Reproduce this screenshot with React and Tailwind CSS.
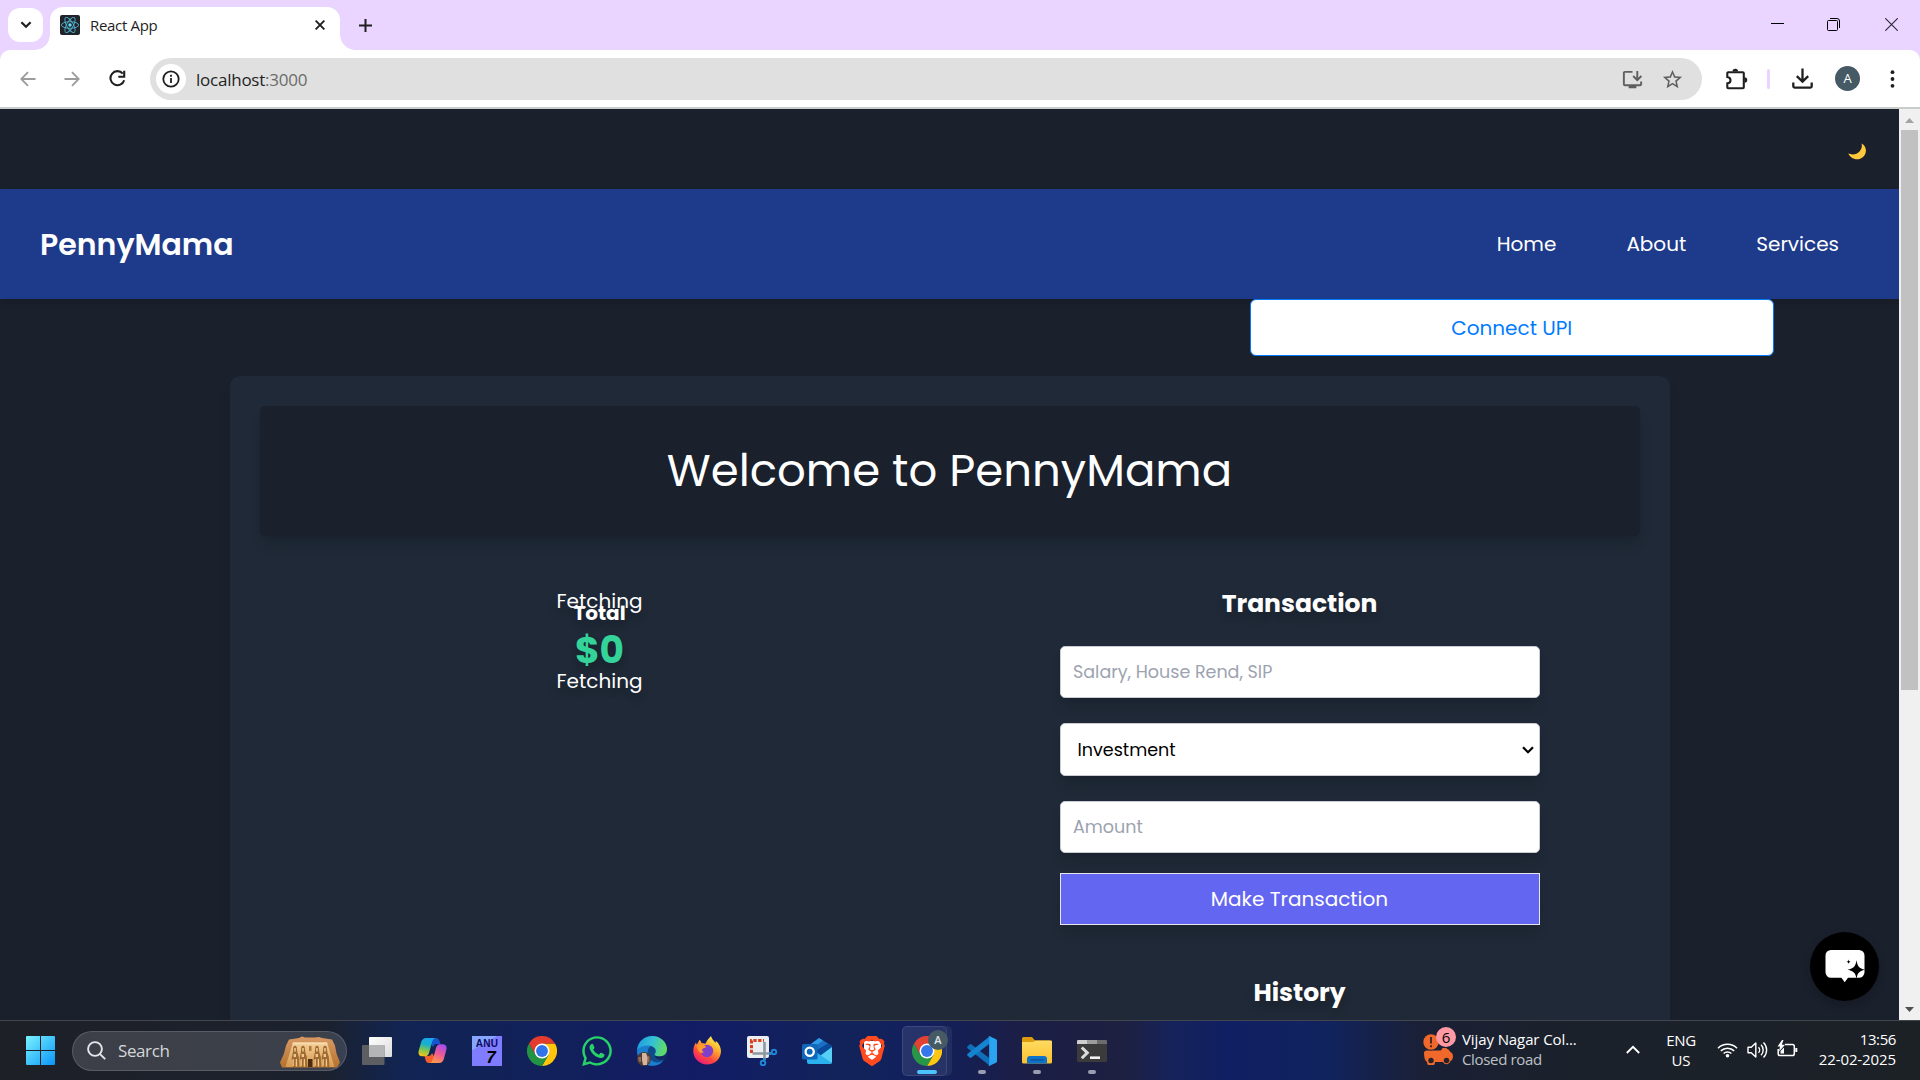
import React from "react";
import { MdOutlineInstallDesktop, MdStarOutline } from "react-icons/md";
import { SiBrave } from "react-icons/si";
import { FaWhatsapp } from "react-icons/fa";

/* ---------- browser chrome ---------- */

function ReactFavicon() {
  return (
    <svg width="20" height="20" viewBox="0 0 20 20" className="shrink-0">
      <rect width="20" height="20" rx="2" fill="#20232a" />
      <g fill="none" stroke="#4fb3cc" strokeWidth="0.9">
        <ellipse cx="10" cy="10" rx="8.6" ry="3.3" />
        <ellipse cx="10" cy="10" rx="8.6" ry="3.3" transform="rotate(60 10 10)" />
        <ellipse cx="10" cy="10" rx="8.6" ry="3.3" transform="rotate(120 10 10)" />
      </g>
      <circle cx="10" cy="10" r="1.7" fill="#61dafb" />
    </svg>
  );
}

function TabStrip() {
  return (
    <div className="flex h-[50px] items-start bg-[#e9d5ff]">
      <button className="ml-2 mt-2 flex h-[34px] w-[35px] items-center justify-center rounded-xl bg-white">
        <svg width="12" height="8" viewBox="0 0 12 8" fill="none" stroke="#1f1f1f" strokeWidth="2.2">
          <path d="M1.4 1.2 6 5.8l4.6-4.6" />
        </svg>
      </button>
      <div className="relative ml-[7px] mt-[7px] flex h-[43px] w-[290px] items-center rounded-t-[13px] bg-white pb-[9px] pl-[10px] pt-[1px]">
        <span className="absolute -left-[15px] bottom-0 size-[15px] bg-[radial-gradient(circle_at_0_0,transparent_14.5px,white_15px)]" />
        <span className="absolute -right-[15px] bottom-0 size-[15px] bg-[radial-gradient(circle_at_100%_0,transparent_14.5px,white_15px)]" />
        <ReactFavicon />
        <span className="ml-[10px] text-[15px] leading-5 tracking-[-0.32px] text-[#1f1f1f]">React App</span>
        <svg className="ml-auto mr-[15px]" width="10" height="10" viewBox="0 0 10 10" stroke="#1f1f1f" strokeWidth="1.9">
          <path d="M.6.6l8.8 8.8M9.4.6.6 9.4" />
        </svg>
      </div>
      <svg className="ml-[19px] mt-[19px]" width="13" height="13" viewBox="0 0 13 13" stroke="#1f1f1f" strokeWidth="2">
        <path d="M6.5 0v13M0 6.5h13" />
      </svg>
      <div className="ml-auto mr-[22px] mt-[18px] flex items-start">
        <svg width="13" height="13" viewBox="0 0 13 13" className="mr-[43px]" stroke="#000">
          <path d="M0 5.5h13" />
        </svg>
        <svg width="14" height="13" viewBox="0 0 14 13" className="mr-[44px]" fill="none" stroke="#000">
          <rect x=".5" y="2.5" width="10" height="10" rx="1" />
          <path d="M3 .5h7a2.5 2.5 0 0 1 2.5 2.5v7" />
        </svg>
        <svg width="13" height="13" viewBox="0 0 13 13" stroke="#2b2433" strokeWidth="1.1">
          <path d="M.3.3l12.4 12.4M12.7.3.3 12.7" />
        </svg>
      </div>
    </div>
  );
}

function Toolbar() {
  return (
    <div className="bg-[#e9d5ff]">
      <div className="flex h-[57px] items-center rounded-t-[10px] bg-white">
        <svg className="ml-[20px]" width="16" height="16" viewBox="0 0 16 16" fill="none" stroke="#9c9c9c" strokeWidth="1.8">
          <path d="M15.500 8H1.700M8 1.200 1.300 8 8 14.800" />
        </svg>
        <svg className="ml-[28px]" width="16" height="16" viewBox="0 0 16 16" fill="none" stroke="#9c9c9c" strokeWidth="1.8">
          <path d="M.5 8h13.800M8 1.200 14.700 8 8 14.800" />
        </svg>
        <svg className="ml-[29px]" width="17" height="17" viewBox="0 0 17 17" fill="none" stroke="#1f1f1f" strokeWidth="2.1">
          <path d="M13.800 3.600A7 7 0 1 0 15.200 10.200" />
          <path d="M15.200.8v5.900H9.300" />
        </svg>
        <div className="ml-[24px] mt-[1px] flex h-[42px] w-[1552px] items-center rounded-full bg-[#e0e0e0] pl-[6px] pr-[18px]">
          <span className="flex size-[30px] items-center justify-center rounded-full bg-white">
            <svg width="18" height="18" viewBox="0 0 18 18" fill="none" stroke="#1f1f1f" strokeWidth="1.8">
              <circle cx="9" cy="9" r="7.700" />
              <path d="M9 8v5M9 4.800v1.900" />
            </svg>
          </span>
          <span className="ml-[10px] mt-[2px] text-[17px] leading-6 tracking-[-0.24px] text-[#1f1f1f]">
            localhost<span className="text-[#6b6b6b]">:3000</span>
          </span>
          <MdOutlineInstallDesktop className="ml-auto size-[23px] text-[#5f5f5f]" />
          <MdStarOutline className="ml-[17px] size-[23px] text-[#5f5f5f]" />
        </div>
        <svg className="ml-[24px]" width="22" height="22" viewBox="0 0 22 22">
          <path d="M2.200 4.200h14.600a1 1 0 0 1 1 1v14a1 1 0 0 1-1 1H2.200a.9.9 0 0 1-.9-.9v-3.900c1.900-.2 3.200-1.400 3.200-3.200S3.200 9.200 1.300 9V5.100a.9.9 0 0 1 .9-.9Z" fill="none" stroke="#1f1f1f" strokeWidth="2.100" />
          <path d="M6.500 3.500a2.800 2.800 0 0 1 5.600 0ZM18.500 9.300a2.700 2.700 0 0 1 0 5.500Z" fill="#1f1f1f" />
        </svg>
        <span className="ml-[19px] h-[20px] w-[3px] rounded-full bg-[#e9d5ff]" />
        <svg className="ml-[22px]" width="21" height="21" viewBox="0 0 21 21" fill="none" stroke="#1f1f1f" strokeWidth="2.300">
          <path d="M10.500.5v12.800M4.800 8.200l5.700 5.500 5.700-5.500M1.300 14.500v3.800q0 1.300 1.300 1.300h15.800q1.300 0 1.300-1.300v-3.800" />
        </svg>
        <span className="ml-[22px] flex size-[25px] items-center justify-center rounded-full bg-[#455a64] text-[13px] leading-none text-white">A</span>
        <svg className="ml-[30px]" width="5" height="18" viewBox="0 0 5 18" fill="#1f1f1f">
          <circle cx="2.500" cy="2.200" r="1.900" />
          <circle cx="2.500" cy="9" r="1.900" />
          <circle cx="2.500" cy="15.800" r="1.900" />
        </svg>
      </div>
      <div className="h-[2px] bg-[#c8cdcc]" />
    </div>
  );
}

function Scrollbar() {
  return (
    <div className="flex w-[21px] flex-col items-center bg-[#f0f0f0]">
      <svg className="mt-[9px]" width="9" height="5" viewBox="0 0 9 5" fill="#a3a3a3">
        <path d="M0 5 4.500 0 9 5Z" />
      </svg>
      <div className="mt-[7px] h-[560px] w-[17px] bg-[#c1c1c1]" />
      <svg className="mb-[8px] mt-auto" width="9" height="5" viewBox="0 0 9 5" fill="#505050">
        <path d="M0 0h9L4.500 5Z" />
      </svg>
    </div>
  );
}

/* ---------- page ---------- */

const LINKS = ["Home", "About", "Services"];

const FIELD =
  "block w-full rounded-[5px] border border-[#c9cdd3] bg-white text-[17.5px] shadow-[0_10px_15px_-3px_rgba(0,0,0,0.12),0_4px_6px_-4px_rgba(0,0,0,0.12)] outline-none";
const HEADING = "text-center font-bold text-[25px] leading-[38px] text-white [text-shadow:0_6px_8px_rgba(0,0,0,0.18)]";

function Page() {
  return (
    <main className="h-[911px] min-w-0 flex-1 overflow-hidden bg-[#1a202c] font-['Poppins','Inter',sans-serif] text-white">
      <div className="flex h-[80px] items-center justify-end pr-[33px] pt-[5px]">
        <svg width="18" height="17" viewBox="0 0 18 17">
          <path d="M13.500 .4c5.200 2.600 5.600 9 2.300 12.800C12 17.800 3.500 17.600.2 10.600c4.600 1.600 8.700.8 11.300-2.200C13.900 5.700 14.300 3 13.500.4Z" fill="#ffc83d" />
        </svg>
      </div>
      <nav className="flex h-[110px] items-center justify-between bg-[#1e3a8a] pl-[40px] pr-[60px] shadow-[0_4px_6px_rgba(0,0,0,0.12)]">
        <span className="text-[30px] font-semibold leading-[45px]">PennyMama</span>
        <div className="flex gap-[70px] text-[20px] leading-[30px]">
          {LINKS.map((label) => (
            <a key={label}>{label}</a>
          ))}
        </div>
      </nav>
      <div className="flex justify-end pr-[125.500px]">
        <button className="h-[57px] w-[523.500px] rounded-[6px] border border-[#007bff] bg-white text-[20px] text-[#007bff]">
          Connect UPI
        </button>
      </div>

      <section className="mx-auto mt-[20px] h-[700px] w-[1440px] rounded-[10px] bg-[#1f2937] p-[30px] shadow-[0_10px_15px_-3px_rgba(0,0,0,0.1)]">
        <h1 className="flex h-[130px] items-center justify-center rounded-[5px] bg-[#1a202c] text-[45px] shadow-[0_10px_15px_-3px_rgba(0,0,0,0.12),0_4px_6px_-4px_rgba(0,0,0,0.12)]">
          Welcome to PennyMama
        </h1>
        <div className="mt-[49px] grid grid-cols-2 gap-[20px]">
          <div className="flex flex-col items-center pt-[1px] [text-shadow:0_6px_8px_rgba(0,0,0,0.2)]">
            <span className="text-[20px] leading-[30px]">Fetching</span>
            <span className="-mt-[18px] text-[20px] font-bold leading-[30px]">Total</span>
            <span className="mt-[2px] text-[37.5px] font-bold leading-[40px] text-[#34d399]">$0</span>
            <span className="-mt-[4px] text-[20px] leading-[30px]">Fetching</span>
          </div>
          <form className="mx-auto w-[480px]">
            <h2 className={HEADING}>Transaction</h2>
            <input
              className={`${FIELD} mt-[23px] h-[52px] px-[12.5px] pb-[1px] placeholder:text-[#9ca3af]`}
              placeholder="Salary, House Rend, SIP"
            />
            <div className="relative mt-[25px]">
              <select className={`${FIELD} h-[53px] appearance-none px-[17px] pt-[2px] text-black`}>
                <option>Investment</option>
              </select>
              <svg className="absolute right-[6px] top-[23px]" width="12" height="8" viewBox="0 0 12 8" fill="none" stroke="#000" strokeWidth="2.200">
                <path d="M1 1.200 6 6.200l5-5" />
              </svg>
            </div>
            <input
              className={`${FIELD} mt-[25px] h-[52px] px-[12.5px] pb-[1px] placeholder:text-[#9ca3af]`}
              placeholder="Amount"
            />
            <button
              type="button"
              className="mt-[20px] block h-[52px] w-full border border-[#e5e7eb] bg-[#6366f1] text-[20px] text-white shadow-[0_10px_15px_-3px_rgba(0,0,0,0.12)]"
            >
              Make Transaction
            </button>
            <h2 className={`${HEADING} mt-[49px]`}>History</h2>
          </form>
        </div>
      </section>
    </main>
  );
}

function ChatBubble() {
  return (
    <button className="absolute bottom-[19px] right-[41px] flex size-[69px] items-center justify-center rounded-full bg-black shadow-[0_4px_10px_rgba(0,0,0,0.2)]">
      <svg width="40" height="34" viewBox="0 0 40 34" className="mt-px">
        <path d="M6 0h28a5.500 5.500 0 0 1 5.500 5.500v16.800A5.500 5.500 0 0 1 34 27.800H23l-3.300 4.400-3.300-4.400H6A5.500 5.500 0 0 1 .5 22.300V5.500A5.500 5.500 0 0 1 6 0Z" fill="#fff" />
        <path d="M31.500 10c.9 6.400 2.500 8.500 8.500 9.800-6 1.300-7.600 3.400-8.500 9.200-.9-5.800-2.500-7.900-9-9.200 6.500-1.300 8.100-3.400 9-9.800ZM23.600 9.500c.3 1.600.8 2 2.200 2.300-1.400.3-1.900.7-2.200 2.300-.3-1.600-.8-2-2.200-2.300 1.400-.3 1.900-.7 2.200-2.300Z" fill="#000" />
      </svg>
    </button>
  );
}

/* ---------- taskbar ---------- */

function WindowsLogo() {
  return (
    <svg width="29" height="29" viewBox="0 0 29 29">
      <defs>
        <linearGradient id="win" x1="0" y1="0" x2="1" y2="1" gradientUnits="objectBoundingBox">
          <stop offset="0" stopColor="#7af3ff" />
          <stop offset="1" stopColor="#0a95f8" />
        </linearGradient>
      </defs>
      <path fill="url(#win)" d="M1 0h13v14H0V1a1 1 0 0 1 1-1Zm14 0h13a1 1 0 0 1 1 1v13H15ZM0 15h14v14H1a1 1 0 0 1-1-1Zm15 0h14v13a1 1 0 0 1-1 1H15Z" />
    </svg>
  );
}

function Temple() {
  return (
    <svg width="60" height="32" viewBox="0 0 60 32">
      <defs>
        <linearGradient id="rock" x1="0" y1="0" x2="0" y2="1">
          <stop offset="0" stopColor="#d99a66" />
          <stop offset="1" stopColor="#b5722f" />
        </linearGradient>
        <linearGradient id="face" x1="0" y1="0" x2="0" y2="1">
          <stop offset="0" stopColor="#f2cf98" />
          <stop offset="1" stopColor="#d79a50" />
        </linearGradient>
      </defs>
      <path fill="url(#rock)" d="M9 3.500 19 2 22 .5l3 1h10l4-.5 3 1 10 1.500 3 6 1.500 8 3.500 9-3 5H2l-2-5 4-9 2-8Z" />
      <path fill="url(#face)" d="M13 6.500h34l7.500 24.500h-49Z" />
      <path fill="#f7dcae" d="M13 6.500h34l.6 1.800H12.400Z" />
      <g fill="#a06a33">
        {[15, 23, 37, 45].map((x) => (
          <path key={x} d={`M${x - 1.700} 11q1.700-2.500 3.400 0l.6 5 1.500 5 .6 10h-2l-.4-7h-1l-.4 7h-2.600l-.4-7h-1l.3-3 1-5Z`} />
        ))}
        <path d="M28 23h4.500v8H28Z" fill="#4b2c10" />
        <path d="M29 10h2.500v5H29Z" fill="#b37b3e" />
      </g>
      <g fill="#f0c88c">
        {[15, 23, 37, 45].map((x) => (
          <path key={x} d={`M${x - .8} 12h1.600v3.500h-1.600Zm-.6 6h2.400v3h-2.400Zm-1 5h1.200v7h-1.200Zm3.200 0h1.200v7h-1.200Z`} />
        ))}
      </g>
    </svg>
  );
}

function TaskView() {
  return (
    <svg width="30" height="28" viewBox="0 0 30 28">
      <defs>
        <linearGradient id="tv" x1="0" y1="0" x2="1" y2="1">
          <stop offset="0" stopColor="#fff" />
          <stop offset="1" stopColor="#dcdcdc" />
        </linearGradient>
      </defs>
      <rect x="7" y="0" width="23" height="20" rx="1" fill="url(#tv)" />
      <rect x="0" y="8" width="22.500" height="20" rx="1" fill="#5d5e62" />
      <rect x="7" y="8" width="15.500" height="12" fill="#b4b5b7" />
    </svg>
  );
}

function Copilot() {
  return (
    <svg width="29" height="27" viewBox="0 0 29 27">
      <defs>
        <linearGradient id="cp1" x1="0.500" y1="0" x2="0.300" y2="1">
          <stop offset="0" stopColor="#1aa5f0" />
          <stop offset=".35" stopColor="#19b0c9" />
          <stop offset=".65" stopColor="#7cc653" />
          <stop offset="1" stopColor="#f5c418" />
        </linearGradient>
        <linearGradient id="cp2" x1="0.700" y1="0" x2="0.300" y2="1">
          <stop offset="0" stopColor="#a54df0" />
          <stop offset=".5" stopColor="#ee5b94" />
          <stop offset="1" stopColor="#ff9b4a" />
        </linearGradient>
      </defs>
      <path fill="#1556cf" d="M9 1h9q2.500 0 3.300 2.500L22.500 7h-4q-2.500 0-3.500 3Z" />
      <path fill="#f4602c" d="M20 26h-9q-2.500 0-3.300-2.500L6.500 19h4q2.500 0 3.500-3Z" />
      <path fill="url(#cp1)" d="M8 1h9q-2 .6-2.800 3.500L11 16q-1 3.300-4 3.300H4Q0 19 .5 14.500L3 5.500Q4.300 1 8 1Z" />
      <path fill="url(#cp2)" d="M21 26h-9q2-.6 2.800-3.500L18 11q1-3.800 4-3.800h3q4 .3 3.500 4.800L26 21.500Q24.700 26 21 26Z" />
    </svg>
  );
}

function Anu() {
  return (
    <div className="flex h-[30px] w-[30px] flex-col items-center bg-[linear-gradient(150deg,#86a6ff_30%,#7f7cff_31%)] pt-[2px] font-['Liberation_Sans'] font-bold">
      <span className="text-[10px] leading-[11px] tracking-[0.3px] text-[#0c0a5e]">ANU</span>
      <span className="ml-[8px] text-[17px] italic leading-[17px] text-black">7</span>
    </div>
  );
}

function Chrome() {
  return (
    <svg width="30" height="30" viewBox="0 0 48 48">
      <path fill="#fdc60a" d="M24 12h20.800A24 24 0 0 1 24 48l10.400-18Z" />
      <path fill="#229342" d="M13.600 30 3.200 12A24 24 0 0 0 24 48l10.400-18Z" />
      <path fill="#e33b2e" d="M3.200 12 13.600 30 24 12h20.800A24 24 0 0 0 3.200 12Z" />
      <circle cx="24" cy="24" r="12" fill="#fff" />
      <circle cx="24" cy="24" r="9.500" fill="#2f74ea" />
    </svg>
  );
}

function Edge() {
  return (
    <svg width="30" height="30" viewBox="0 0 30 30">
      <defs>
        <linearGradient id="ed1" x1="0" y1="0.300" x2="1" y2="0.500">
          <stop offset="0" stopColor="#1f9be0" />
          <stop offset=".5" stopColor="#35c1d6" />
          <stop offset="1" stopColor="#63dd5c" />
        </linearGradient>
      </defs>
      <circle cx="15" cy="15" r="15" fill="#114a8b" />
      <path fill="#1b7fd0" d="M0 15C1 8 10 6 14 10c-4 2-5 9 0 14 3 3 8 3 12 1-5 6-14 6-19 2Q0 23 0 15Z" />
      <path fill="url(#ed1)" d="M0 14C1 5 8 0 15 0c9 0 15 6.500 15 13 0 5-4 7.500-8 7.500-3 0-5-1.200-4.200-2.600C20.500 15 18 9.500 11 9.500 6 9.500 2 11 0 14Z" />
      <path fill="#14265f" d="M17.800 17.900c-.8 1.400 1.200 2.600 4.200 2.600 2.600 0 6.200-.8 8-2.500.4 2-1.400 4-3.400 5.600-5 1-9.200-.6-8.800-5.700Z" />
      <circle cx="7" cy="23" r="7" fill="#4c3a36" />
      <path fill="#d6b39c" d="M5 17h4l2 5-1 7H6l-1-5Z" />
      <path fill="#8b6a58" d="M1 21h3v5H2ZM10.500 19.500l2 1v5l-2 2Z" />
    </svg>
  );
}

function Firefox() {
  return (
    <svg width="28" height="29" viewBox="0 0 28 29">
      <defs>
        <linearGradient id="ff" x1="0.850" y1="0.050" x2="0.300" y2="1">
          <stop offset="0" stopColor="#fff44f" />
          <stop offset=".35" stopColor="#ffb02e" />
          <stop offset=".7" stopColor="#ff4b3e" />
          <stop offset="1" stopColor="#ed1a78" />
        </linearGradient>
      </defs>
      <path fill="url(#ff)" d="M18 0c1 3.500 3 4.500 4.500 7 .3-.8.3-1.500.2-2.300C27 8 28.500 13 27.800 17 26.800 24 21 28.500 14 28.500S.5 23 .3 15.500C.2 12 1.300 8.500 3 6.500c.1 1 .3 1.600.8 2C5 7.200 6 5 6.300 3.800c1.200.8 2 2.200 2.400 3.500 1.300-.3 2.600-.2 3.800.4C13.500 5 15.500 2.500 18 0Z" />
      <circle cx="14" cy="15" r="6.200" fill="#7f3fc9" />
      <path fill="#ff9a2b" d="M3.500 9.500C7 7.500 11 8.500 13.500 11c-1 .8-3.500.8-4.200 2.300-.6 1.500.3 2.500 1.700 2.700-2 1.600-4.500.8-5.500-1Z" />
    </svg>
  );
}

function Snip() {
  return (
    <svg width="30" height="30" viewBox="0 0 30 30">
      <rect width="22" height="22" rx="2" fill="#eceff1" />
      <path d="M4.500 17V4.500H17" fill="none" stroke="#d8401f" strokeWidth="3" strokeDasharray="3.200 1.600" />
      <path d="M17.500 6v18M5.500 17.500h19" stroke="#8f999f" strokeWidth="2.600" />
      <circle cx="27" cy="16" r="2.300" fill="none" stroke="#1e88d6" strokeWidth="1.900" />
      <circle cx="16" cy="27" r="2.300" fill="none" stroke="#1e88d6" strokeWidth="1.900" />
      <path d="M22 18l3-1M17.500 22l-1 3" stroke="#1e88d6" strokeWidth="1.900" />
    </svg>
  );
}

function Outlook() {
  return (
    <svg width="30" height="26" viewBox="0 0 30 26">
      <path fill="#1a6fc4" d="M5 9 17 0l13 8v3L18 18 5 14Z" />
      <path fill="#2f9ae6" d="M5 9 17 0l4 2.500L8 12Z" />
      <path fill="#0a4a9c" d="M13 13 26 5.500l4 2.500v3l-12 7Z" />
      <path fill="#57d0f5" d="M30 9v14.500a2.500 2.500 0 0 1-2.500 2.500H7L30 9Z" />
      <path fill="#2bb2ee" d="M30 25 14 14 5 20v4a2 2 0 0 0 2 2h20.500Z" />
      <rect x="0" y="6" width="15.500" height="15.500" rx="1.500" fill="#1066b8" />
      <circle cx="7.700" cy="13.700" r="4.100" fill="none" stroke="#fff" strokeWidth="2.300" />
    </svg>
  );
}

function Brave() {
  return (
    <div className="relative flex items-center justify-center">
      <span className="absolute h-[20px] w-[17px] rounded-b-full bg-white" />
      <SiBrave className="relative size-[30px] text-[#ff4a1f]" />
    </div>
  );
}

function ActiveChrome() {
  return (
    <div className="relative flex h-[50px] w-[50px] items-center justify-center rounded-[5px] bg-white/[0.06]">
      <span className="absolute inset-y-0 left-0 w-[45px] rounded-[5px] border border-white/10 bg-white/[0.03]" />
      <Chrome />
      <span className="absolute right-[4px] top-[4px] flex size-[20px] items-center justify-center rounded-full bg-[#455a64] text-[11px] font-semibold leading-none text-[#dfe5e8]">
        A
      </span>
    </div>
  );
}

function VSCode() {
  return (
    <svg width="30" height="30" viewBox="0 0 100 100">
      <path fill="#0f6fb8" d="M2 34 9 28q3-2 6 0l60 46v24L2 41q-3-4 0-7Z" />
      <path fill="#1583cf" d="M2 66 9 72q3 2 6 0l60-46V2L2 59q-3 4 0 7Z" />
      <path fill="#29a3f2" d="M75 1 97 11q3 2 3 5v68q0 3-3 5L75 99q-4 1-7-2 5 3 7-3V6q-2-6-7-3 3-3 7-2Z" />
      <path fill="#29a3f2" d="M74 2h4v96h-4Z" />
    </svg>
  );
}

function Folder() {
  return (
    <svg width="30" height="27" viewBox="0 0 30 27">
      <defs>
        <linearGradient id="fo" x1="0" y1="0" x2="0" y2="1">
          <stop offset="0" stopColor="#ffdc62" />
          <stop offset="1" stopColor="#fbc02d" />
        </linearGradient>
      </defs>
      <path fill="#dd9c0b" d="M0 1.500A1.500 1.500 0 0 1 1.500 0H10l3 3.500h15V10H0Z" />
      <path fill="url(#fo)" d="M0 5h11l2.500-1.500H29a1 1 0 0 1 1 1V25a1.500 1.500 0 0 1-1.500 1.500h-27A1.500 1.500 0 0 1 0 25Z" />
      <path fill="#0f72c9" d="M5 26.500V22a3 3 0 0 1 3-3h14a3 3 0 0 1 3 3v4.500Z" />
      <path d="M9 22.800h12" stroke="#0b4f92" strokeWidth="1.300" strokeLinecap="round" />
    </svg>
  );
}

function Terminal() {
  return (
    <svg width="30" height="22" viewBox="0 0 30 22">
      <rect width="30" height="22" rx="1.300" fill="#3b3b3b" />
      <path fill="#cfcfcf" d="M1.300 0H10v4H0V1.300A1.300 1.300 0 0 1 1.300 0Z" />
      <path fill="#9c9c9c" d="M10 0h10v4H10Z" />
      <path fill="#6c6c6c" d="M20 0h8.700A1.300 1.300 0 0 1 30 1.300V4H20Z" />
      <path d="m4.800 7.500 5.500 5.300-5.500 5.400" fill="none" stroke="#dcdcdc" strokeWidth="3" />
      <path d="M13 17.700h10" stroke="#f2f2f2" strokeWidth="2.600" />
    </svg>
  );
}

const APPS = [
  { icon: <TaskView /> },
  { icon: <Copilot /> },
  { icon: <Anu /> },
  { icon: <Chrome /> },
  { icon: <FaWhatsapp className="size-[34px] text-[#25d366]" /> },
  { icon: <Edge /> },
  { icon: <Firefox /> },
  { icon: <Snip /> },
  { icon: <Outlook /> },
  { icon: <Brave /> },
  { icon: <ActiveChrome />, mark: "w-[20px] bg-[#4cc2ff]" },
  { icon: <VSCode />, mark: "w-[8px] bg-[#9a9cb0]" },
  { icon: <Folder />, mark: "w-[8px] bg-[#9a9cb0]" },
  { icon: <Terminal />, mark: "w-[8px] bg-[#9a9cb0]" },
];

function TrafficAlert() {
  return (
    <div className="relative h-[38px] w-[32px]">
      <svg className="absolute left-0 top-[7px]" width="30" height="31" viewBox="0 0 30 31">
        <path fill="#f0682a" d="M1 19q0-2.500 3-2.500h14l1.500-2.500h3.500q3 1.500 4.500 4 2.500 1 2.500 4 0 4-2.500 5a4 4 0 0 1-7.500 1H12a4 4 0 0 1-8 0Q1 26 1 19Z" />
        <circle cx="8" cy="26.500" r="2.700" fill="#26212a" />
        <circle cx="23.500" cy="26.500" r="2.700" fill="#26212a" />
        <circle cx="8" cy="8" r="8.500" fill="#1f202c" />
        <circle cx="8" cy="8" r="7.700" fill="#f0682a" />
        <path d="M8 3v6.500M8 11.200v2" stroke="#26212a" strokeWidth="1.700" />
      </svg>
      <span className="absolute left-[13px] top-0 flex size-[20px] items-center justify-center rounded-full bg-[#ff99a4] text-[15px] leading-none text-black">6</span>
    </div>
  );
}

function Taskbar() {
  return (
    <footer className="flex h-[60px] items-center border-t border-[#44464d] bg-[linear-gradient(90deg,#1e2027_0%,#1b212e_17%,#112453_21%,#12205c_30%,#121c66_36%,#12235a_44%,#12205e_48%,#1b1e46_53%,#1d2040_58.5%,#15225a_61%,#101f62_64%,#10235e_69%,#1a2036_74%,#1b212c_80%,#1c2126_100%)] text-white">
      <div className="ml-[26px]"><WindowsLogo /></div>
      <div className="ml-[17px] flex h-[40px] w-[275px] items-center rounded-full border border-white/15 bg-white/[0.14] pl-[14px] pr-[6px]">
        <svg width="19" height="19" viewBox="0 0 19 19" fill="none" stroke="#e4e6ea" strokeWidth="1.900">
          <circle cx="8" cy="8" r="6.900" />
          <path d="m12.800 12.800 5.400 5.400" />
        </svg>
        <span className="ml-[12px] text-[17px] leading-6 tracking-[-0.4px] text-[#d5d7db]">Search</span>
        <div className="ml-auto mt-[2px]"><Temple /></div>
      </div>
      <div className="ml-[2.500px] flex">
        {APPS.map(({ icon, mark }, i) => (
          <div key={i} className="relative flex h-[59px] w-[55px] items-center justify-center">
            {icon}
            {mark && <span className={`absolute bottom-[6px] h-[4px] rounded-full ${mark}`} />}
          </div>
        ))}
      </div>
      <div className="ml-auto mr-[24px] flex items-center text-[15px] leading-[20px]">
        <div className="-ml-[1px] -mt-[9px]"><TrafficAlert /></div>
        <div className="-mt-[4px] ml-[7px] w-[172px] whitespace-nowrap">
          <div className="tracking-[-0.1px]">Vijay Nagar Col...</div>
          <div className="tracking-[-0.34px] text-[#bfc1c5]">Closed road</div>
        </div>
        <svg width="14" height="9" viewBox="0 0 14 9" fill="none" stroke="#fff" strokeWidth="1.900" className="-ml-[8px] -mt-[3px]">
          <path d="m.8 8 6.200-6.200L13.200 8" />
        </svg>
        <div className="-mt-[2px] ml-[26px] w-[30px] text-center">
          <div className="tracking-[-0.3px]">ENG</div>
          <div>US</div>
        </div>
        <svg className="-mt-[2px] ml-[21px]" width="21" height="16" viewBox="0 0 21 16" fill="none" stroke="#fff" strokeWidth="1.500">
          <path d="M1 6.200a13.400 13.400 0 0 1 19 0M3.800 8.900a9.500 9.500 0 0 1 13.400 0M6.600 11.500a5.500 5.500 0 0 1 7.800 0" />
          <circle cx="10.500" cy="13.700" r="1.800" fill="#fff" stroke="none" />
        </svg>
        <svg className="-mt-[1px] ml-[9px]" width="21" height="18" viewBox="0 0 21 18" fill="none" stroke="#fff" strokeWidth="1.400">
          <path d="M1 6.300h3.200L8.800 2v14l-4.600-4.300H1Z" strokeLinejoin="round" />
          <path d="M11.500 6.200a4 4 0 0 1 0 5.600M14 3.800a7.300 7.300 0 0 1 0 10.400M16.500 1.500a10.600 10.600 0 0 1 0 15" />
        </svg>
        <svg className="-mt-[3px] ml-[9px]" width="21" height="18" viewBox="0 0 21 18" fill="none" stroke="#fff" strokeWidth="1.500">
          <path d="M8 4.500h7.500A1.800 1.800 0 0 1 17.300 6.300v7.400a1.800 1.800 0 0 1-1.800 1.800H3a1.800 1.800 0 0 1-1.800-1.800V9" />
          <path d="M19.300 8v4" strokeWidth="2" />
          <path d="M5 0 .5 6.500H3L2 11.500l6-6.700H4.800L6.500 0ZM3.500 13.500V11L7 7.500v6Z" fill="#fff" stroke="none" />
        </svg>
        <div className="-mt-[4px] ml-[18px] w-[80px] text-right">
          <div className="tracking-[-0.4px]">13:56</div>
          <div className="tracking-[-0.1px]">22-02-2025</div>
        </div>
      </div>
    </footer>
  );
}

export default function App() {
  return (
    <div className="flex h-[1080px] w-[1920px] flex-col overflow-hidden bg-[#1a202c] font-['Segoe_UI','Open_Sans',sans-serif]">
      <TabStrip />
      <Toolbar />
      <div className="relative flex h-[911px]">
        <Page />
        <Scrollbar />
        <ChatBubble />
      </div>
      <Taskbar />
    </div>
  );
}
